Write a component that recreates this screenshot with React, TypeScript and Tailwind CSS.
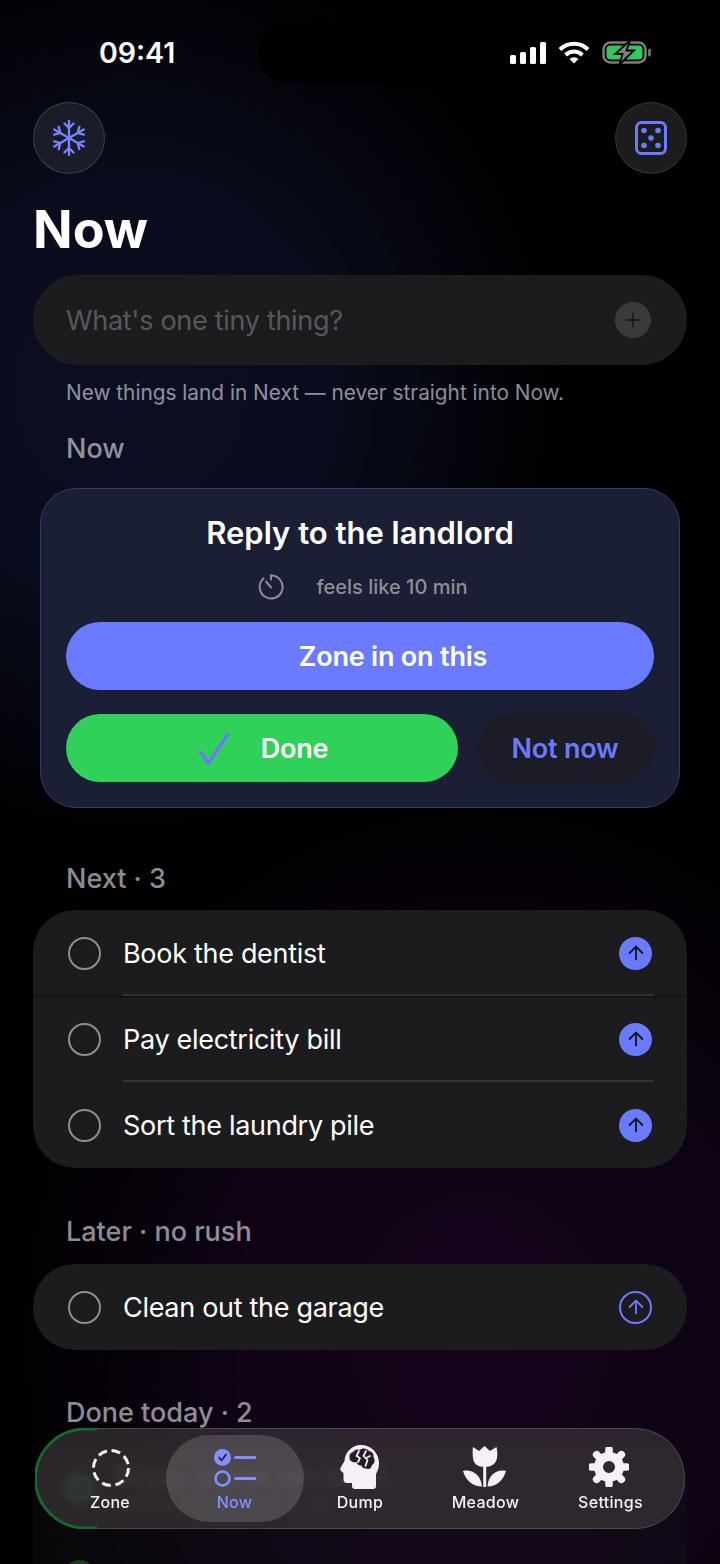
import { Plus, ArrowUp } from 'lucide-react'

const BLUE = '#6b7bff'

function SignalIcon() {
  return (
    <svg width="36" height="22" viewBox="0 0 36 22" fill="#fff">
      <rect x="0" y="13" width="6" height="9" rx="1.5" />
      <rect x="10" y="10" width="6" height="12" rx="1.5" />
      <rect x="20" y="5" width="6" height="17" rx="1.5" />
      <rect x="30" y="0" width="6" height="22" rx="1.5" />
    </svg>
  )
}

function WifiIcon() {
  return (
    <svg width="32" height="23" viewBox="0 0 32 23" fill="none" stroke="#fff" strokeWidth="4">
      <path d="M2 8.5 A20 20 0 0 1 30 8.5" />
      <path d="M7.6 14 A12 12 0 0 1 24.4 14" />
      <path d="M16 22.5 L11.5 18 A6.4 6.4 0 0 1 20.5 18 Z" fill="#fff" stroke="none" />
    </svg>
  )
}

function BatteryIcon() {
  return (
    <svg width="50" height="25" viewBox="0 0 50 25">
      <rect x="1.5" y="2.5" width="42" height="20" rx="7" fill="none" stroke="#7c7c7c" strokeWidth="2.5" />
      <rect x="4.5" y="5.5" width="36" height="14" rx="4" fill="#34c759" />
      <rect x="46" y="8.5" width="3" height="8" rx="1.5" fill="#6a6a6a" />
      <path d="M28 0.5 L13 14 H20.5 L17.5 24.5 L32 10.5 H24.5 Z" fill="#808080" stroke="#000" strokeWidth="1.8" />
    </svg>
  )
}

function SnowflakeIcon() {
  return (
    <svg width="36" height="38" viewBox="0 0 36 38" fill="none" stroke="#7685ff" strokeWidth="2.3" strokeLinecap="round" strokeLinejoin="round">
      {[0, 60, 120].map((deg) => (
        <g key={deg} transform={`rotate(${deg} 18 19)`}>
          <path d="M18 2 V36" />
          <path d="M13.5 4.5 L18 9 L22.5 4.5" />
          <path d="M13.5 33.5 L18 29 L22.5 33.5" />
        </g>
      ))}
    </svg>
  )
}

function DiceIcon() {
  return (
    <svg width="32" height="34" viewBox="0 0 32 34" fill={BLUE}>
      <rect x="1.5" y="1.5" width="29" height="31" rx="5" fill="none" stroke={BLUE} strokeWidth="3" />
      <circle cx="9" cy="9.5" r="2.8" />
      <circle cx="23" cy="9.5" r="2.8" />
      <circle cx="16" cy="17" r="2.8" />
      <circle cx="9" cy="24.5" r="2.8" />
      <circle cx="23" cy="24.5" r="2.8" />
    </svg>
  )
}

function TimerIcon() {
  return (
    <svg width="26" height="26" viewBox="0 0 26 26" fill="none" stroke="#8e8e93" strokeWidth="2" strokeLinecap="round">
      <path d="M13 1.5 A11.5 11.5 0 1 1 5.5 4.4" />
      <path d="M13 1.5 V5.5" />
      <path d="M13 13.5 L8 7.5" />
    </svg>
  )
}

function DoneCheck() {
  return (
    <svg width="32" height="34" viewBox="0 0 32 34" fill="none" stroke={BLUE} strokeWidth="3.6">
      <path d="M1.5 19 L10.5 31 L30 2" />
    </svg>
  )
}

function SmallCheck() {
  return (
    <svg width="20" height="20" viewBox="0 0 20 20" fill="none" stroke="#1c1c1e" strokeWidth="3">
      <path d="M4 10 L8.5 15 L16 5" />
    </svg>
  )
}

function ZoneIcon() {
  return (
    <svg className="ml-[2px]" width="38" height="38" viewBox="0 0 38 38" fill="none">
      <circle cx="19" cy="19" r="17.5" stroke="#f5f0f8" strokeWidth="3" strokeDasharray="9 4.75" />
    </svg>
  )
}

function NowIcon() {
  return (
    <svg width="42" height="38" viewBox="0 0 42 38" fill="none">
      <circle cx="8.5" cy="8.5" r="8.5" fill="#8390ff" />
      <path d="M5 8.5 L7.5 11.5 L12 5.5" stroke="#26232c" strokeWidth="1.8" strokeLinecap="round" strokeLinejoin="round" />
      <circle cx="8.5" cy="29.5" r="7" stroke="#8390ff" strokeWidth="2.6" />
      <path d="M21.5 8.5 H41 M21.5 29.5 H41" stroke="#8390ff" strokeWidth="3" strokeLinecap="round" />
    </svg>
  )
}

function BrainIcon() {
  return (
    <svg className="-mb-[3px]" width="40" height="46" viewBox="0 0 40 46">
      <path
        d="M21 1 C31 1 39 9 39 19 C39 24 37.5 27 36 30 V42 C36 44 35 45 33 45 H15 C13 45 12 44 12 42 V39 H7 C4.5 39 3.5 37.5 3.5 35 V29 L1 27 C0 25.5 0 24.5 1 23 L4.5 17 C5 8 12 1 21 1 Z"
        fill="#f5f0f8"
      />
      <path
        d="M13 8 C15 5 18 5 20 6 C23 3.5 27 4.5 29 7 C32 7.5 34 10 33.5 13 C35.5 16 34.5 20 32 21 C31.5 24.5 28.5 26 26.5 24.5 C24 25 22 23.5 21.5 21.5 C19 22 17 20.5 16.5 18 C13 19 9.5 17 9.5 14 C9 11 10.5 8.5 13 8 Z"
        fill="#241c26"
      />
      <path d="M19 7 L16.5 12 L20 14 L18 18 M26 7 L23.5 12 L27.5 16 L25.5 22 M30 12 L27 13.5" fill="none" stroke="#f5f0f8" strokeWidth="1.7" strokeLinecap="round" strokeLinejoin="round" />
    </svg>
  )
}

function TulipIcon() {
  return (
    <svg className="mr-[2px]" width="43" height="41" viewBox="0 0 43 41" fill="#f5f0f8">
      <path d="M10 1 L16 5 L21.5 0 L27 5 L33.5 1 C34.5 5 34.5 8 34 12 C33 18 28 21 22 21 C15 21 10.5 18 10 12 C9.5 8 9.5 5 10 1 Z" />
      <rect x="20.2" y="20" width="3" height="21" />
      <path d="M0 25 C8 23 18 28 19 40.5 C10 40.5 3 35 0 25 Z" />
      <path d="M43 25 C35 23 25 28 24.5 40.5 C33 40.5 40 35 43 25 Z" />
    </svg>
  )
}

function GearIcon() {
  return (
    <svg className="mr-[3px]" width="40" height="40" viewBox="0 0 40 40" fill="none" stroke="#f5f0f8">
      <circle cx="20" cy="20" r="10.5" strokeWidth="9" />
      {[0, 45, 90, 135, 180, 225, 270, 315].map((deg) => (
        <path key={deg} d="M20 6 V2.5" strokeWidth="7.5" strokeLinecap="round" transform={`rotate(${deg} 20 20)`} />
      ))}
    </svg>
  )
}

const NAV_ITEMS = [
  { label: 'Zone', icon: <ZoneIcon />, center: 'w-[124px]' },
  { label: 'Now', icon: <NowIcon />, center: 'w-[125px]', active: true },
  { label: 'Dump', icon: <BrainIcon />, center: 'w-[126px]' },
  { label: 'Meadow', icon: <TulipIcon />, center: 'w-[125px]' },
  { label: 'Settings', icon: <GearIcon />, center: 'w-[125px]' },
]

function Label({ children, className = '' }: { children: React.ReactNode; className?: string }) {
  return <div className={`h-[32px] px-[66px] text-[27px] leading-[34px] font-medium text-[#ebebf5]/60 ${className}`}>{children}</div>
}

function Radio() {
  return <span className="h-[33px] w-[33px] shrink-0 rounded-full border-[2.5px] border-[#8e8e93]" />
}

function Row({ text, last, first, outline }: { text: string; last?: boolean; first?: boolean; outline?: boolean }) {
  return (
    <div className={`flex h-[86px] items-stretch gap-[22px] pl-[35px] pr-[33px] ${first ? 'shadow-[0_1px_0_rgba(0,0,0,0.4)]' : ''}`}>
      <span className="flex items-center"><Radio /></span>
      <div className={`flex flex-1 items-center justify-between ${last ? '' : 'border-b-2 border-[#323234] pt-[2px]'}`}>
        <span className="mt-[2px] text-[27px] tracking-[-0.3px] text-white">{text}</span>
        {outline ? (
          <span className="mr-[2px] flex h-[33px] w-[33px] items-center justify-center rounded-full border-[2.5px] border-[#6b7bff]">
            <ArrowUp size={22} strokeWidth={2} color={BLUE} />
          </span>
        ) : (
          <span className="mr-[2px] flex h-[33px] w-[33px] items-center justify-center rounded-full bg-[#6b7bff]">
            <ArrowUp size={22} strokeWidth={2} color="#14141c" />
          </span>
        )}
      </div>
    </div>
  )
}

export default function App() {
  return (
    <div
      className="relative h-[1564px] w-[720px] overflow-hidden bg-black bg-[radial-gradient(ellipse_440px_460px_at_130px_390px,#0b0f22_0%,#090c1c_45%,transparent_100%),radial-gradient(ellipse_480px_560px_at_480px_1340px,#14041c_0%,#0f0315_50%,transparent_100%)]"
      style={{ fontFamily: 'Inter, "Noto Sans", sans-serif' }}
    >
      {/* Status bar */}
      <div className="relative flex h-[102px] items-start justify-between pt-[35px] pl-[99px] pr-[68px]">
        <span className="text-[28.5px] leading-[36px] font-semibold text-white">09:41</span>
        <div className="flex items-center gap-[12px] pt-[5px]">
          <SignalIcon />
          <WifiIcon />
          <BatteryIcon />
        </div>
        <div className="absolute left-[258px] top-[23px] h-[60px] w-[204px] rounded-full bg-black" />
      </div>

      <div className="flex justify-between px-[33px]">
        <button className="flex h-[72px] w-[72px] items-center justify-center rounded-full border border-white/15 bg-[#1a1c2a]">
          <SnowflakeIcon />
        </button>
        <button className="flex h-[72px] w-[72px] items-center justify-center rounded-full border border-white/10 bg-[#1c1c1e]">
          <DiceIcon />
        </button>
      </div>

      <h1 className="mt-[24px] h-[62px] px-[33px] text-[52px] leading-[64px] font-bold text-white">Now</h1>

      {/* Quick add */}
      <div className="mx-[33px] mt-[15px] flex h-[90px] items-center justify-between rounded-[45px] bg-[#1c1c1e] pl-[33px] pr-[36px]">
        <span className="mt-[2px] text-[27px] tracking-[-0.3px] text-[#ebebf5]/30">What's one tiny thing?</span>
        <span className="flex h-[36px] w-[36px] items-center justify-center rounded-full bg-[#3a3a3c]">
          <Plus size={22} strokeWidth={2} color="#1c1c1e" />
        </span>
      </div>
      <p className="mt-[15px] h-[24px] px-[66px] text-[20.8px] leading-[26px] text-[#ebebf5]/60">New things land in Next — never straight into Now.</p>

      <Label className="mt-[28px]">Now</Label>

      {/* Current task */}
      <div className="mx-[40px] mt-[24px] rounded-[36px] border border-[#363b62] bg-[#1a1f35] px-[25px] pt-[25px] pb-[25px]">
        <div className="text-center text-[31px] leading-[38px] font-semibold text-white">Reply to the landlord</div>
        <div className="mt-[22px] flex h-[26px] items-center justify-center gap-[33px] pl-[5px]">
          <TimerIcon />
          <span className="text-[20px] font-medium text-[#8e8e93]">feels like 10 min</span>
        </div>
        <button className="mt-[22px] flex h-[68px] w-full items-center justify-center rounded-[34px] bg-[#6b7bff] pl-[66px] pt-[2px] text-[27px] font-semibold tracking-[-0.2px] text-white">
          Zone in on this
        </button>
        <div className="mt-[24px] flex gap-[18px]">
          <button className="flex h-[68px] w-[392px] items-center justify-center gap-[31px] rounded-[34px] bg-[#30d158] pl-[2px] pt-[2px] text-[27px] font-semibold tracking-[-0.2px] text-white">
            <DoneCheck />
            Done
          </button>
          <button className="flex h-[68px] flex-1 items-center justify-center rounded-[34px] bg-[#1b1c26] pt-[2px] text-[27px] font-semibold tracking-[-0.2px] text-[#6b7bff]">
            Not now
          </button>
        </div>
      </div>

      <Label className="mt-[54px]">Next · 3</Label>
      <div className="mx-[33px] mt-[16px] rounded-[42px] bg-[#1c1c1e]">
        <Row text="Book the dentist" first />
        <Row text="Pay electricity bill" />
        <Row text="Sort the laundry pile" last />
      </div>

      <Label className="mt-[47px]">Later · no rush</Label>
      <div className="mx-[33px] mt-[17px] rounded-[42px] bg-[#1c1c1e]">
        <Row text="Clean out the garage" last outline />
      </div>

      <Label className="mt-[46px]">Done today · 2</Label>
      <div className="mx-[33px] mt-[17px] rounded-t-[42px] bg-[#1c1c1e]/25">
        <div className="flex h-[86px] items-center gap-[18px] pl-[30px] opacity-40">
          <span className="flex h-[33px] w-[33px] items-center justify-center rounded-full bg-[#30d158]/70">
            <SmallCheck />
          </span>
          <div>
            <div className="text-[28px] leading-[32px] text-white/50">Reply to the landlord</div>
            <div className="text-[18px] leading-[22px] text-white/30">felt like 10 min, took 8 min</div>
          </div>
        </div>
        <div className="flex h-[86px] items-center gap-[18px] pl-[30px] pt-[4px] opacity-40">
          <span className="flex h-[33px] w-[33px] items-center justify-center rounded-full bg-[#30d158]/70" />
          <div className="text-[28px] text-white/40">Book the vet</div>
        </div>
      </div>

      {/* Tab bar floats over the list */}
      <nav className="absolute left-[35px] top-[1428px] flex h-[101px] w-[650px] rounded-[50px] border border-white/15 bg-[#3a3438]/70 pl-[12px] backdrop-blur-[3px]">
        <svg className="absolute -left-px -top-px" width="64" height="101" viewBox="0 0 64 101" fill="none">
          <path d="M62 1 H50 A49.5 49.5 0 0 0 50 100 H62" stroke="#15692a" strokeWidth="3" />
        </svg>
        {NAV_ITEMS.map((item) => (
          <div key={item.label} className={`relative flex h-full flex-col items-center ${item.center}`}>
            {item.active && <div className="absolute left-[-6px] right-[-7px] top-[6px] h-[87px] rounded-[44px] bg-white/15" />}
            <div className="relative flex h-[58px] items-end justify-center">{item.icon}</div>
            <span className={`relative mt-[3px] text-[16px] leading-[24px] font-medium tracking-[0.3px] ${item.active ? 'text-[#8390ff]' : 'text-[#f5f0f8]'}`}>
              {item.label}
            </span>
          </div>
        ))}
      </nav>
    </div>
  )
}
